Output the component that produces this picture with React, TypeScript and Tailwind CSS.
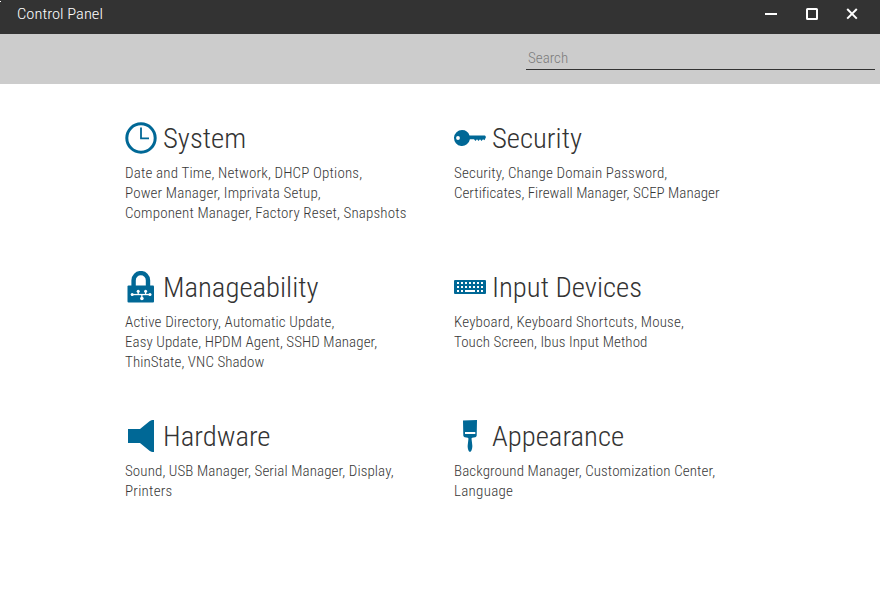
import type { ReactNode } from "react";

type Line = { text: string; spacing: string };
type Section = { title: string; icon: ReactNode; lines: Line[] };

const iconClass = "size-8 shrink-0 fill-[#006896]";

const ClockIcon = () => (
  <svg viewBox="0 0 32 32" className={iconClass}>
    <circle cx="16" cy="16" r="14.2" fill="none" stroke="#006896" strokeWidth="3" />
    <path d="M16 5.500V16.300h8" fill="none" stroke="#006896" strokeWidth="1.800" />
  </svg>
);

const KeyIcon = () => (
  <svg viewBox="0 0 32 32" className={iconClass}>
    <path
      fillRule="evenodd"
      d="M8 8a8 8 0 0 1 7.500 5.500H31l1 1.500-1.500 3.300-1.500-1-1.500 1.700-1.500-1.700-1.500 1.700-1.500-1.700-1.500 1.700-1.500-1.700H15.900A8 8 0 1 1 8 8ZM4 14.100a1.900 1.900 0 1 0 0 3.800 1.900 1.900 0 0 0 0-3.800Z"
    />
  </svg>
);

const LockIcon = () => (
  <svg viewBox="0 0 32 32" className={iconClass}>
    <path d="M8.600 16V9.300a7.200 7.200 0 0 1 14.400 0V16" fill="none" stroke="#006896" strokeWidth="4.400" />
    <rect x="2.500" y="14.500" width="26.500" height="17" rx="1" />
    <g fill="#fff">
      <rect x="6" y="22.900" width="20" height="1.300" />
      <rect x="12.600" y="20" width="1.200" height="4" />
      <rect x="20" y="20" width="1.200" height="4" />
      <rect x="16.200" y="23" width="1.300" height="4" />
      <circle cx="7.200" cy="23.600" r="1.500" />
      <circle cx="25" cy="23.600" r="1.500" />
      <circle cx="13.200" cy="20.300" r="1.500" />
      <circle cx="20.600" cy="20.300" r="1.500" />
      <circle cx="16.900" cy="27.500" r="1.800" />
    </g>
  </svg>
);

const KeyboardIcon = () => (
  <svg viewBox="0 0 32 32" className={iconClass}>
    <rect y="9" width="32" height="14" rx="1" />
    <g fill="#fff">
      {[3, 7, 11, 15, 19, 23, 27].map((x) => (
        <g key={x}>
          <rect x={x} y="11" width="2" height="2" />
          <rect x={x} y="15" width="2" height="2" />
        </g>
      ))}
      <rect x="3" y="19" width="2" height="2" />
      <rect x="7" y="19" width="2" height="2" />
      <rect x="11" y="19" width="10" height="2" />
      <rect x="23" y="19" width="2" height="2" />
      <rect x="27" y="19" width="2" height="2" />
    </g>
  </svg>
);

const SpeakerIcon = () => (
  <svg viewBox="0 0 32 32" className={iconClass}>
    <path d="M3 9h12L24.500 1.200C25.500.4 27 0 29 0v32c-2 0-3.500-.4-4.500-1.200L15 23H3Z" />
  </svg>
);

const BrushIcon = () => (
  <svg viewBox="0 0 32 32" className={iconClass}>
    <path
      fillRule="evenodd"
      d="M9 .5 23 0l-.3 15.500c0 .9-.7 1.500-1.500 1.700l-2.900.5c-.7.2-.8.800-.7 1.500l.7 6c.3 2.500-.8 6.600-2.300 6.600s-2.600-4.100-2.300-6.600l.7-6c.1-.7 0-1.300-.7-1.500l-2.900-.5c-.8-.2-1.500-.8-1.500-1.700ZM11 12v2h10.300v-2Z"
    />
  </svg>
);

const sections: Section[] = [
  {
    title: "System",
    icon: <ClockIcon />,
    lines: [
      { text: "Date and Time, Network, DHCP Options,", spacing: "tracking-[0.17px]" },
      { text: "Power Manager, Imprivata Setup,", spacing: "tracking-[0.15px]" },
      { text: "Component Manager, Factory Reset, Snapshots", spacing: "tracking-[0.14px]" },
    ],
  },
  {
    title: "Security",
    icon: <KeyIcon />,
    lines: [
      { text: "Security, Change Domain Password,", spacing: "tracking-[0.15px]" },
      { text: "Certificates, Firewall Manager, SCEP Manager", spacing: "tracking-[0.01px]" },
    ],
  },
  {
    title: "Manageability",
    icon: <LockIcon />,
    lines: [
      { text: "Active Directory, Automatic Update,", spacing: "tracking-[0.15px]" },
      { text: "Easy Update, HPDM Agent, SSHD Manager,", spacing: "tracking-[0.08px]" },
      { text: "ThinState, VNC Shadow", spacing: "tracking-[0.07px]" },
    ],
  },
  {
    title: "Input Devices",
    icon: <KeyboardIcon />,
    lines: [
      { text: "Keyboard, Keyboard Shortcuts, Mouse,", spacing: "tracking-[0.17px]" },
      { text: "Touch Screen, Ibus Input Method", spacing: "tracking-[0.08px]" },
    ],
  },
  {
    title: "Hardware",
    icon: <SpeakerIcon />,
    lines: [
      { text: "Sound, USB Manager, Serial Manager, Display,", spacing: "tracking-[0.1px]" },
      { text: "Printers", spacing: "tracking-[0.25px]" },
    ],
  },
  {
    title: "Appearance",
    icon: <BrushIcon />,
    lines: [
      { text: "Background Manager, Customization Center,", spacing: "tracking-[0.1px]" },
      { text: "Language", spacing: "tracking-[0.27px]" },
    ],
  },
];

export default function App() {
  return (
    <div className="flex h-[590px] w-[880px] flex-col bg-white font-['Roboto',sans-serif] font-light text-[#333] [font-stretch:75%]">
      <header className="relative flex h-[34px] justify-between bg-[#333] pl-[17px] pr-[22px]">
        <span className="absolute left-0 top-[1px] h-px w-px bg-white" />
        <h1 className="h-7 origin-left scale-x-[1.1] text-[15px] leading-7 text-white">Control Panel</h1>
        <div className="flex h-7 items-center">
          <button aria-label="Minimize" className="h-0.5 w-3 bg-white" />
          <button aria-label="Maximize" className="ml-[29px] size-3 rounded-[1.5px] border-2 border-white" />
          <button aria-label="Close" className="ml-7 size-3">
            <svg viewBox="0 0 12 12" className="size-3 fill-none stroke-white stroke-2">
              <path d="m1.200 1 9.600 9.600m0-9.600-9.600 9.600" />
            </svg>
          </button>
        </div>
      </header>
      <div className="flex h-[50px] justify-end bg-[#ccc] pr-[5px]">
        <input
          placeholder="Search"
          className="mt-3 h-6 w-[349px] border-b border-[#333] pl-0.5 text-[15px] outline-none placeholder:text-[#7c7c7c]"
        />
      </div>
      <main className="grid grid-cols-[329px_329px] auto-rows-[149px] pl-[125px] pt-[38px]">
        {sections.map((s) => (
          <section key={s.title}>
            <div className="flex h-8 items-center gap-1.5">
              {s.icon}
              <h2 className="origin-left scale-x-[1.064] whitespace-nowrap pt-0.5 text-[27px] leading-8">{s.title}</h2>
            </div>
            <div className="pt-[9px] text-[15px] leading-5 text-[#383838]">
              {s.lines.map((l) => (
                <p key={l.text} className={`whitespace-nowrap ${l.spacing}`}>
                  {l.text}
                </p>
              ))}
            </div>
          </section>
        ))}
      </main>
    </div>
  );
}
